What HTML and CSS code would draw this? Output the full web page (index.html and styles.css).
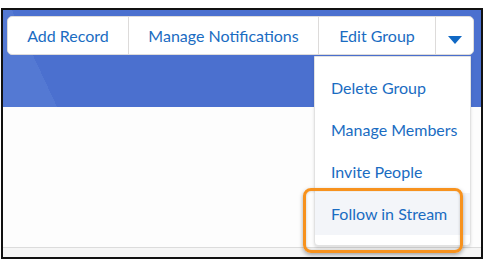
FILE: index.html
```html
<!DOCTYPE html>
<html lang="en">
<head>
    <meta charset="UTF-8">
    <title>Group Actions</title>
    <link rel="stylesheet" href="styles.css">
</head>
<body>
    <div class="frame">
        <div class="header">
            <div class="btn-group">
                <button class="btn">Add Record</button>
                <button class="btn">Manage Notifications</button>
                <button class="btn">Edit Group</button>
                <button class="btn btn-more">
                    <svg width="14" height="8" viewBox="0 0 14 8"><path d="M0 0h14L7 8z" fill="#1068c4"/></svg>
                </button>
            </div>
        </div>

        <div class="content">
            <div class="footer-row"></div>
        </div>

        <!-- dropdown opened from the arrow button -->
        <ul class="menu">
            <li>Delete Group</li>
            <li>Manage Members</li>
            <li>Invite People</li>
            <li class="hover">Follow in Stream</li>
        </ul>

        <div class="callout"></div>
    </div>
</body>
</html>
```

FILE: styles.css
```css
body {
    margin: 0;
    background-color: #ffffff;
    font-family: Lato, 'Open Sans', sans-serif;
}
.frame {
    position: relative;
    margin: 8px 0 0 1px;
    width: 478px;
    height: 247px;
    border: 2px solid #111111;
    background-color: #fdfdfd;
    display: flex;
    flex-direction: column;
}
.header {
    height: 97px;
    padding: 6px 0 0 4px;
    box-sizing: border-box;
    background: linear-gradient(65deg, #5479d3 0, #5479d3 49px, #4b70cf 49px);
}
.btn-group {
    display: flex;
    width: 467px;
    height: 39px;
    background-color: #ffffff;
    border: 1px solid #dddbda;
    border-radius: 5px;
    box-sizing: border-box;
}
.btn {
    flex-shrink: 0;
    font-family: inherit;
    font-size: 16px;
    color: #1a6cc2;
    white-space: nowrap;
    background: none;
    border: none;
    border-right: 1px solid #dddbda;
    padding: 0;
    cursor: pointer;
}
.btn:nth-child(1) { width: 121px; }
.btn:nth-child(2) { width: 190px; }
.btn:nth-child(3) { width: 117px; }
.btn-more {
    flex: 1;
    border-right: none;
    padding-top: 4px;
}
.content {
    flex: 1;
    display: flex;
    flex-direction: column;
    justify-content: flex-end;
}
.footer-row {
    height: 9px;
    border-top: 1px solid #dcdcdc;
    background-color: #f6f6f6;
}
.menu {
    position: absolute;
    left: 311px;
    top: 46px;
    width: 157px;
    margin: 0;
    padding: 10px 0 10px;
    list-style: none;
    background-color: #ffffff;
    border: 1px solid #e2e2e2;
    border-radius: 0 0 4px 4px;
    box-shadow: 0 2px 3px rgba(0, 0, 0, 0.12);
    box-sizing: border-box;
}
.menu li {
    height: 42px;
    line-height: 42px;
    padding-left: 16px;
    font-size: 16px;
    color: #1a6cc2;
}
.menu li.hover {
    background-color: #f3f5f9;
}
.callout {
    position: absolute;
    left: 300px;
    top: 178px;
    width: 160px;
    height: 65px;
    border: 3px solid #f7921e;
    border-radius: 8px;
    box-sizing: border-box;
    box-shadow: 0 2px 4px rgba(0, 0, 0, 0.35), inset 0 0 3px rgba(0, 0, 0, 0.2);
}
```
